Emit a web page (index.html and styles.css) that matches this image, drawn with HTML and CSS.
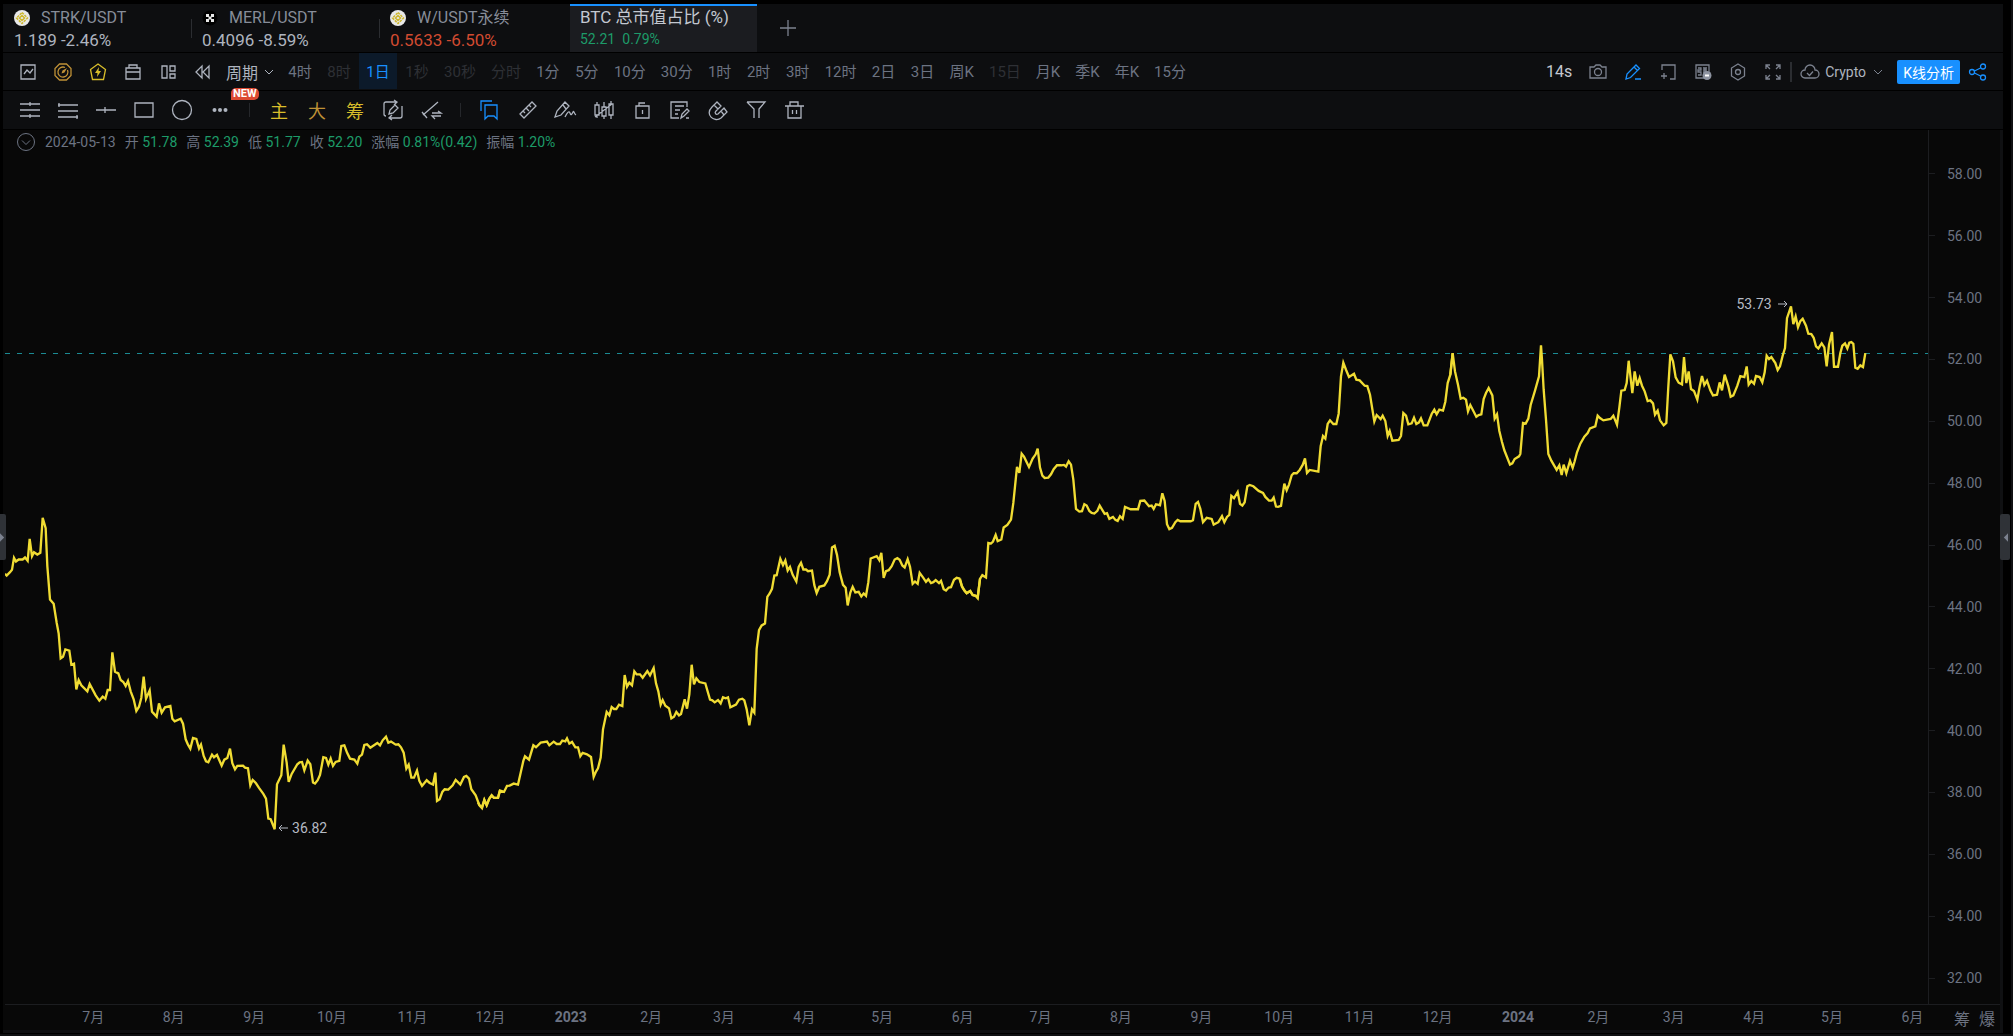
FILE: index.html
```html
<!DOCTYPE html>
<html lang="zh-CN">
<head>
<meta charset="utf-8">
<title>BTC 总市值占比 (%)</title>
<link rel="stylesheet" href="styles.css">
</head>
<body>
<div class="app">
  <nav class="tabs" aria-label="行情标签">
    <a class="tab" href="#strk">
      <span class="tab-name"><svg class="coin" viewBox="0 0 16 16"><circle cx="8" cy="8" r="8" fill="#e8e8e8"/><path d="M8 2.500 13.500 8 8 13.500 2.500 8z" fill="none" stroke="#cdb62c" stroke-width="1.500" stroke-dasharray="2.500 1"/><path d="M8 5.500 10.500 8 8 10.500 5.500 8z" fill="none" stroke="#cdb62c" stroke-width="1.500"/></svg>STRK/USDT</span>
      <span class="tab-price">1.189 -2.46%</span>
    </a>
    <a class="tab" href="#merl">
      <span class="tab-name"><svg class="coin" viewBox="0 0 16 16"><circle cx="8" cy="8" r="7.500" fill="#000"/><path d="M4 4h3v2.500h2V4h3v3H9.500v2H12v3H9V9.500H7V12H4V9h2.500V7H4z" fill="#e8e8e8"/></svg>MERL/USDT</span>
      <span class="tab-price">0.4096 -8.59%</span>
    </a>
    <a class="tab" href="#w">
      <span class="tab-name"><svg class="coin" viewBox="0 0 16 16"><circle cx="8" cy="8" r="8" fill="#e8e8e8"/><path d="M8 2.500 13.500 8 8 13.500 2.500 8z" fill="none" stroke="#cdb62c" stroke-width="1.500" stroke-dasharray="2.500 1"/><path d="M8 5.500 10.500 8 8 10.500 5.500 8z" fill="none" stroke="#cdb62c" stroke-width="1.500"/></svg>W/USDT永续</span>
      <span class="tab-price down">0.5633 -6.50%</span>
    </a>
    <a class="tab tab-active" href="#btc" aria-current="page">
      <span class="tab-title">BTC 总市值占比 (%)</span>
      <span class="tab-ratio">52.21&ensp;0.79%</span>
    </a>
    <button class="tab-add" aria-label="新增标签"><svg class="icon" viewBox="0 0 20 20"><path d="M10 2v16M2 10h16"/></svg></button>
  </nav>

  <div class="bar bar-period">
    <button class="tool" aria-label="图表"><svg class="icon" viewBox="0 0 20 20"><path d="M3 3h14v14H3zM6 12l3-4 3 3 3-4"/></svg></button>
    <button class="tool bronze" aria-label="指针"><svg class="icon" viewBox="0 0 20 20"><path d="M6.500 2h7L18 6.500v7L13.500 18h-7L2 13.500v-7z"/><path d="M12 5.500a5 5 0 1 0 2.500 2.500"/><path d="M8.500 11.500l1-3L14 6l-2.500 4.500z" fill="currentColor" stroke="none"/></svg></button>
    <button class="tool yellow" aria-label="闪电"><svg class="icon" viewBox="0 0 20 20"><path d="M10 2l7.500 5.500-2 10h-11l-2-10z"/><path d="M11 5l-4 6h2.500L9 15l4-6h-2.500z" fill="currentColor" stroke="none"/></svg></button>
    <button class="tool" aria-label="工具箱"><svg class="icon" viewBox="0 0 20 20"><path d="M3 6h14v11H3zM6 6V3h8v3M3 10h14"/></svg></button>
    <button class="tool" aria-label="布局"><svg class="icon" viewBox="0 0 20 20"><path d="M4 4h5v12H4zM12 4h5v5h-5zM12 12h5v4h-5z"/></svg></button>
    <button class="tool" aria-label="回放"><svg class="icon" viewBox="0 0 20 20"><path d="M9 4v12l-6-6zM16 4v12l-6-6z"/></svg></button>
    <button class="period-menu">周期<svg class="chev" viewBox="0 0 10 6"><path d="M1 1l4 4 4-4"/></svg><span class="badge">NEW</span></button>
    <div class="periods">
      <button class="period">4时</button><button class="period dim">8时</button><button class="period on">1日</button><button class="period dim">1秒</button><button class="period dim">30秒</button><button class="period dim">分时</button><button class="period">1分</button><button class="period">5分</button><button class="period">10分</button><button class="period">30分</button><button class="period">1时</button><button class="period">2时</button><button class="period">3时</button><button class="period">12时</button><button class="period">2日</button><button class="period">3日</button><button class="period">周K</button><button class="period dim">15日</button><button class="period">月K</button><button class="period">季K</button><button class="period">年K</button><button class="period">15分</button>
    </div>
    <div class="actions">
      <span class="timer">14s</span>
      <button class="tool muted" aria-label="截图"><svg class="icon" viewBox="0 0 20 20"><path d="M2 5h4l2-2h4l2 2h4v11H2z"/><circle cx="10" cy="10" r="3.500"/></svg></button>
      <button class="tool blue" aria-label="画线"><svg class="icon" viewBox="0 0 20 20"><path d="M3 17l1-5 9-9 3.500 3.500-9 9zM11 5l3.500 3.500M12 17h6"/></svg></button>
      <button class="tool muted" aria-label="新增窗口"><svg class="icon" viewBox="0 0 20 20"><path d="M4 8V3h13v14h-5M3 14h6M6 11v6"/></svg></button>
      <button class="tool muted" aria-label="弹幕"><svg class="icon" viewBox="0 0 20 20"><path d="M3 3h13v13H3zM5 6h3v2H5v2h3v3H5M10 6h4M10 8h4M10 10h4M12 6v7"/><circle cx="14" cy="13.500" r="4.500" fill="#8d93a0" stroke="none"/><path d="M12 13.500h4" stroke="#fff" stroke-width="2"/></svg></button>
      <button class="tool muted" aria-label="设置"><svg class="icon" viewBox="0 0 20 20"><path d="M10 2l6.500 4v8L10 18l-6.500-4V6z"/><circle cx="10" cy="10" r="2.500"/></svg></button>
      <button class="tool muted" aria-label="全屏"><svg class="icon" viewBox="0 0 20 20"><path d="M3 7V3h4M3 3l4 4M13 3h4v4M17 3l-4 4M3 13v4h4M3 17l4-4M17 13v4h-4M17 17l-4-4"/></svg></button>
      <label class="layout-pick">
        <svg class="icon cloud" viewBox="0 0 20 20"><path d="M5 16a4 4 0 0 1 0-8 5 5 0 0 1 10 0 4 4 0 0 1 0 8zM7 11l2.500 2.500L13 9.500"/></svg>
        <select aria-label="布局方案"><option>Crypto</option></select>
        <svg class="chev" viewBox="0 0 10 6"><path d="M1 1l4 4 4-4"/></svg>
      </label>
      <button class="analyse">K线分析</button>
      <button class="tool blue" aria-label="分享"><svg class="icon" viewBox="0 0 20 20"><circle cx="4" cy="10" r="2.500"/><circle cx="15" cy="4.500" r="2.500"/><circle cx="15" cy="15.500" r="2.500"/><path d="M6.500 9l6-3M6.500 11l6 3"/></svg></button>
    </div>
  </div>

  <div class="bar bar-draw">
    <button class="pen" aria-label="通道线"><svg class="icon" viewBox="0 0 20 20"><path d="M0 4h20M0 10h20M0 16h20M10 2v4M10 14v4"/></svg></button>
    <button class="pen" aria-label="平行线"><svg class="icon" viewBox="0 0 20 20"><path d="M0 5h20M0 11h20M0 17h20M1 3v4M19 15v4"/></svg></button>
    <button class="pen" aria-label="水平线"><svg class="icon" viewBox="0 0 20 20"><path d="M0 10h20M9 7v6"/></svg></button>
    <button class="pen" aria-label="矩形"><svg class="icon" viewBox="0 0 20 20"><path d="M1 3h18v14H1z"/></svg></button>
    <button class="pen" aria-label="圆形"><svg class="icon" viewBox="0 0 20 20"><circle cx="10" cy="10" r="9.500"/></svg></button>
    <button class="pen" aria-label="更多"><svg class="icon" viewBox="0 0 20 20"><g fill="currentColor" stroke="none"><circle cx="4.500" cy="10" r="2"/><circle cx="10" cy="10" r="2"/><circle cx="15.500" cy="10" r="2"/></g></svg></button>
    <span class="split"></span>
    <button class="pen glyph yellow">主</button>
    <button class="pen glyph bronze">大</button>
    <button class="pen glyph yellow">筹</button>
    <button class="pen" aria-label="切换画线"><svg class="icon" viewBox="0 0 20 20"><path d="M13 2H3q-2 0-2 2v10q0 2 2 2M11 0l3 2-3 3M7 18h10q2 0 2-2V6M9 15l-3 3 3 2M6 14l1-4 5-5 3 3-5 5z"/></svg></button>
    <button class="pen" aria-label="线段切换"><svg class="icon" viewBox="0 0 20 20"><path d="M2 15L17 2M1 12l5 6M11 13h9l-3-2M20 16h-9l3 3"/></svg></button>
    <span class="split"></span>
    <button class="pen blue" aria-label="书签"><svg class="icon" viewBox="0 0 20 20"><path d="M1 11V1h11M5 5h12v14l-3-3h-6l-3 3z"/></svg></button>
    <button class="pen" aria-label="尺子"><svg class="icon" viewBox="0 0 20 20"><path d="M2 14L14 2l4 4L6 18zM5 11l2 2M8 8l3 3M11 5l2 2"/></svg></button>
    <button class="pen" aria-label="画笔"><svg class="icon" viewBox="0 0 20 20"><path d="M-1 17l2-6 8-9 4 4-8 9zM7 5l3 4M9 17c2-4 4-7 5-4s2 1 3-1 1 2 3 3"/></svg></button>
    <button class="pen" aria-label="K线"><svg class="icon" viewBox="0 0 20 20"><path d="M1 5h4v10H1zM3 2v3M3 15v3M8 7h4v9H8zM10 2v5M10 16v3M15 4h4v11h-4zM17 1v3M17 15v4M1 17L18 4"/></svg></button>
    <button class="pen" aria-label="锁定"><svg class="icon" viewBox="0 0 20 20"><path d="M4 6h13v12H4zM7 6V3h6M10.500 10v4"/></svg></button>
    <button class="pen" aria-label="笔记"><svg class="icon" viewBox="0 0 20 20"><path d="M17 7V2H1v16h8M5 6h9M5 10h5M5 14h3M11 18l1-4 5-5 2 2-5 5zM16 18h3"/></svg></button>
    <button class="pen" aria-label="磁吸"><svg class="icon" viewBox="0 0 20 20"><path d="M9 2L4 7c-8 8 3 16 9 11l6-6-3-4-6 6c-2 1-4-1-2-3l5-5zM6 5l4 4M13 11l3 4"/></svg></button>
    <button class="pen" aria-label="筛选"><svg class="icon" viewBox="0 0 20 20"><path d="M1 2h18l-6 7v9M1 2l7 7v9"/></svg></button>
    <button class="pen" aria-label="删除"><svg class="icon" viewBox="0 0 20 20"><path d="M1 6h19M4 6v12h13V6M6 6V2h8v4M8.500 10v4M12.500 10v4"/></svg></button>
  </div>

  <main class="board">
    <section class="plot">
      <svg class="series" viewBox="15 390 5769 2625" preserveAspectRatio="none" role="img" aria-label="BTC 总市值占比走势">
        <path class="last" d="M15 1060H5784"/>
        <g transform="translate(0 1440)"><polyline points="15,283 20,288 30,278 36,271 42,235 48,246 56,240 68,240 75,234 83,244 89,178 96,230 102,218 112,225 121,220 128,115 137,146 142,260 150,360 161,373 170,430 176,462 182,537 189,532 196,510 208,514 214,556 222,553 229,630 236,602 244,618 262,636 269,614 287,648 298,664 308,652 316,658 323,632 330,632 337,519 345,577 355,582 362,602 370,608 377,620 384,605 392,636 401,660 409,695 417,682 424,655 431,592 438,658 449,633 456,697 470,712 477,672 485,700 495,684 511,680 517,718 524,726 542,718 549,733 557,780 564,796 571,808 579,776 589,779 597,808 603,796 611,830 618,846 625,849 636,826 642,834 651,827 665,859 673,841 682,836 690,808 697,852 705,870 712,860 729,859 735,865 744,867 751,918 758,902 768,912 777,926 790,944 798,958 805,1018 812,1020 824,1050 831,915 844,888 851,796 860,850 866,908 875,884 892,855 899,849 906,848 913,873 923,844 931,855 939,910 945,913 953,903 960,887 970,834 978,836 985,856 992,838 999,860 1007,848 1018,845 1024,800 1033,798 1041,820 1050,838 1063,841 1072,853 1078,832 1086,826 1093,797 1101,795 1111,805 1132,791 1140,798 1148,783 1158,772 1165,790 1173,787 1187,796 1195,795 1203,804 1211,820 1219,868 1226,856 1234,895 1242,895 1251,874 1258,905 1266,920 1280,903 1289,911 1299,916 1306,880 1311,965 1319,960 1327,938 1334,930 1345,931 1358,918 1367,902 1381,916 1392,893 1399,890 1407,898 1414,930 1427,948 1438,978 1446,987 1453,962 1460,978 1467,960 1475,948 1482,956 1494,956 1500,932"/></g>
        <g transform="translate(1440 1560)"><polyline points="-6,850 0,860 6,864 13,842 20,858 28,838 35,829 42,836 54,836 60,814 72,818 81,800 89,799 101,793 114,796 121,765 130,725 135,711 147,721 160,678 168,684 182,670 201,667 208,678 221,667 230,674 240,674 247,664 256,666 261,657 268,673 276,668 286,684 294,684 301,711 308,701 321,705 333,713 341,773 348,757 354,747 362,715 369,630 380,578 388,588 395,563 402,569 409,569 417,556 427,560 434,467 441,502 448,490 456,498 463,456 470,465 480,465 488,475 502,455 510,468 521,446 528,492 535,516 542,556 548,542 556,559 567,567 574,597 582,592 589,578 597,588 603,584 614,540 621,568 628,525 635,436 642,495 649,477 658,488 676,492 690,541 697,543 704,549 714,542 722,552 729,534 737,537 744,534 751,564 768,556 777,541 787,538 793,543 800,570 808,618 816,570 823,580 830,388 837,332 845,318 855,312 862,232 869,222 876,208 883,168 890,167 901,118 909,137 916,123 923,153 930,142 938,166 949,186 956,142 963,130 970,150 978,150 984,155 996,153 1003,197 1010,221 1018,202 1033,198 1041,185 1049,166 1056,84 1064,79 1071,106 1079,158 1089,196 1097,205 1103,258 1111,219 1118,202 1126,219 1136,217 1144,231 1151,222 1158,229 1165,188 1172,117 1190,110 1198,122 1204,100 1211,175 1218,155 1226,152 1235,140 1244,120 1252,116 1259,121 1267,138 1274,144 1283,119 1290,142 1298,193 1305,186 1313,193 1319,160 1330,175 1338,187 1345,179 1353,191 1360,188 1367,182 1377,191 1383,184 1391,209 1398,213 1406,204 1413,203 1422,181 1430,175 1438,177 1445,198 1454,214 1460,221 1470,215 1479,227 1487,229 1493,236 1500,178"/></g>
        <g transform="translate(2880 960)"><polyline points="0,778 6,802 12,812 20,821 31,814 37,826 47,829 53,834 60,778 67,767 78,774 85,670 93,672 99,666 107,646 113,665 124,660 131,624 142,616 153,600 160,550 171,442 178,460 185,402 192,411 207,442 218,417 227,404 233,387 240,444 247,468 254,475 265,474 273,464 281,449 291,437 304,437 312,436 318,441 326,425 333,435 340,480 348,568 358,576 366,575 373,554 380,558 388,574 395,580 403,582 412,574 419,558 434,583 441,581 448,598 459,592 466,601 473,604 480,590 488,598 495,562 512,569 534,569 541,544 553,543 567,560 575,558 581,568 588,554 600,557 607,521 614,544 621,614 628,629 636,625 646,608 653,601 661,605 692,605 699,602 707,553 714,547 721,568 729,608 740,595 755,598 761,615 775,608 786,590 793,608 801,592 808,586 814,529 822,536 833,517 840,553 847,558 854,548 862,500 869,496 880,500 896,514 909,520 916,532 927,543 935,543 941,534 948,561 954,562 963,559 973,492 980,512 987,495 995,467 1001,461 1010,461 1019,451 1028,436 1035,416 1041,460 1049,451 1075,456 1082,380 1089,349 1096,357 1103,313 1110,302 1120,313 1129,313 1136,282 1143,170 1150,129 1158,150 1167,172 1182,162 1189,180 1199,182 1214,198 1222,199 1230,225 1243,305 1250,286 1262,298 1268,288 1276,304 1283,349 1289,334 1297,363 1316,361 1323,349 1330,280 1338,288 1345,314 1355,311 1362,294 1369,313 1377,308 1383,296 1391,317 1402,317 1415,283 1423,270 1430,284 1438,270 1449,273 1456,246 1463,190 1471,165 1478,100"/></g>
        <g transform="translate(4200 840)"><polyline points="151,285 158,220 165,275 174,315 182,357 190,354 198,360 204,395 211,376 229,411 236,406 244,404 251,358 258,340 266,325 277,347 284,417 291,404 298,454 306,487 313,512 330,555 337,551 344,538 357,530 361,523 369,430 377,432 385,417 392,376 405,333 417,290 423,197 426,240 431,330 438,420 445,523 454,543 470,571 478,557 485,586 491,555 499,581 510,544 518,565 524,545 531,518 541,492 553,471 563,460 570,446 586,440 593,408 600,415 610,422 632,418 640,408 651,435 658,384 664,333 674,331 680,310 686,243 697,340 704,275 712,318 719,295 726,318 734,335 743,364 751,362 759,371 765,405 773,393 780,422 791,437 799,430 805,320 811,224 819,245 827,293 836,309 846,314 852,232 859,310 866,275 873,328 882,334 892,360 899,320 906,289 913,316 921,303 931,332 939,347 951,345 959,308 966,332 974,285 985,320 992,351 1000,347 1012,318 1021,289 1033,292 1040,260 1046,315 1054,304 1062,312 1068,289 1079,292 1087,308 1094,278 1100,228 1107,238 1114,232 1126,250 1133,271 1140,260 1148,228 1155,205 1161,115 1173,80 1180,133 1187,110 1194,142 1201,124 1208,117 1218,138 1225,162 1234,163 1241,174 1248,200 1255,206 1265,191 1273,203 1280,260 1287,195 1296,157 1302,261 1314,261 1321,220 1327,198 1335,191 1342,206 1348,189 1354,187 1360,192 1366,264 1373,267 1381,257 1389,262 1396,220"/></g>
      </svg>
      <p class="ohlc"><svg class="icon fold" viewBox="0 0 20 20"><circle cx="10" cy="10" r="8.500"/><path d="M6 8.500l4 4 4-4"/></svg><span>2024-05-13</span><span>开 <b>51.78</b></span><span>高 <b>52.39</b></span><span>低 <b>51.77</b></span><span>收 <b>52.20</b></span><span>涨幅 <b>0.81%(0.42)</b></span><span>振幅 <b>1.20%</b></span></p>
      <span class="mark mark-low"><svg class="arrow" viewBox="0 0 10 8"><path d="M10 4H1M4 1L1 4l3 3"/></svg>36.82</span>
      <span class="mark mark-high">53.73<svg class="arrow" viewBox="0 0 10 8"><path d="M0 4h9M6 1l3 3-3 3"/></svg></span>
    </section>

    <div class="prices">
      <span class="gap"></span><span>58.00</span><span>56.00</span><span>54.00</span><span>52.00</span><span>50.00</span><span>48.00</span><span>46.00</span><span>44.00</span><span>42.00</span><span>40.00</span><span>38.00</span><span>36.00</span><span>34.00</span><span>32.00</span>
    </div>

    <div class="months">
      <span></span><span>7月</span><span>8月</span><span>9月</span><span>10月</span><span>11月</span><span>12月</span><span class="year">2023</span><span>2月</span><span>3月</span><span>4月</span><span>5月</span><span>6月</span><span>7月</span><span>8月</span><span>9月</span><span>10月</span><span>11月</span><span>12月</span><span class="year">2024</span><span>2月</span><span>3月</span><span>4月</span><span>5月</span><span>6月</span>
    </div>
    <div class="corner"><button>筹</button><button>爆</button></div>
  </main>

  <button class="handle handle-left" aria-label="展开左侧栏"><svg viewBox="0 0 6 10"><path d="M0 0l5 5-5 5z"/></svg></button>
  <button class="handle handle-right" aria-label="展开右侧栏"><svg viewBox="0 0 6 10"><path d="M6 0L1 5l5 5z"/></svg></button>
</div>
</body>
</html>
```
FILE: styles.css
```css
* { box-sizing: border-box; }

body {
  margin: 0;
  background: #000;
  color: #aeb4bf;
  font-family: Roboto, "Noto Sans CJK SC", sans-serif;
  font-size: 15px;
}

button, select {
  margin: 0;
  padding: 0;
  border: 0;
  background: none;
  color: inherit;
  font: inherit;
  cursor: pointer;
}

.app {
  position: relative;
  display: flex;
  flex-direction: column;
  min-height: 100vh;
  padding: 4px 8px 1px 3px;
  border-right: 2px solid #101113;
  border-bottom: 2px solid #101113;
}

.icon {
  width: 20px;
  height: 20px;
  fill: none;
  stroke: currentColor;
  stroke-width: 1.3;
  flex: none;
  overflow: visible;
}

.chev {
  width: 10px;
  height: 6px;
  fill: none;
  stroke: currentColor;
  flex: none;
}

.yellow { color: #d8bd2a; }
.bronze { color: #bf9136; }
.blue { color: #1890ff; }
.muted { color: #7c828f; }

/* symbol tabs */
.tabs {
  display: flex;
  height: 49px;
  background: #0d0e10;
  border-bottom: 1px solid #000;
}

.tab {
  position: relative;
  display: flex;
  flex-direction: column;
  width: 188px;
  padding: 2px 0 0 11px;
  color: #aeb4bf;
  font-size: 16px;
  line-height: 23px;
  text-decoration: none;
}

.tab + .tab:not(.tab-active)::before {
  content: "";
  position: absolute;
  left: 0;
  top: 15px;
  width: 1px;
  height: 19px;
  background: #2b2d31;
}

.tab-name {
  display: flex;
  align-items: center;
  gap: 11px;
  color: #878d99;
}

.coin { width: 16px; height: 16px; }
.tab-price { font-size: 17px; }
.tab-price.down { color: #d14b31; }

.tab-active {
  width: 187px;
  margin-left: 3px;
  padding: 0 0 0 10px;
  border-top: 2px solid #1890ff;
  background: #1b1c20;
}

.tab-title { color: #c3c8d1; font-size: 17px; }

.tab-ratio {
  color: #1d9b69;
  font-size: 14px;
  line-height: 20px;
}

.tab-add {
  width: 62px;
  color: #7c828f;
}

.tab-add .icon { vertical-align: middle; }

/* toolbars */
.bar {
  display: flex;
  align-items: center;
  height: 38px;
  padding-left: 7px;
  background: #0d0e10;
  border-bottom: 1px solid #000;
}

.tool, .pen {
  display: flex;
  align-items: center;
  justify-content: center;
  flex: none;
  height: 100%;
}

.tool { width: 35px; }

.period-menu {
  position: relative;
  display: flex;
  align-items: center;
  gap: 6px;
  height: 100%;
  padding: 0 7px 0 6px;
  font-size: 16px;
}

.badge {
  position: absolute;
  left: 11px;
  top: 35px;
  z-index: 1;
  padding: 0 2px;
  border-radius: 5px 5px 5px 0;
  background: #dc4a33;
  color: #fff;
  font-size: 11px;
  font-weight: 700;
  line-height: 12px;
}

.periods {
  display: flex;
  gap: 1px;
  height: 100%;
}

.period {
  min-width: 38px;
  height: 36px;
  padding: 0 7px 2px;
  color: #6c7382;
  white-space: nowrap;
}

.period.dim { color: #2e3035; }

.period.on {
  background: #0c1a2a;
  color: #1890ff;
}

.actions {
  display: flex;
  align-items: center;
  height: 100%;
  margin-left: auto;
  padding-right: 8px;
}

.timer { padding-right: 8px; color: #c3c8d1; font-size: 16px; }

.layout-pick {
  display: flex;
  align-items: center;
  gap: 5px;
  height: 20px;
  margin-right: 14px;
  padding-left: 8px;
  border-left: 2px solid #2b2d31;
  color: #7c828f;
}

.layout-pick select {
  width: 43px;
  appearance: none;
  color: #aeb4bf;
  font-size: 14px;
}

.analyse {
  height: 24px;
  padding: 0 6px;
  border-radius: 2px;
  background: #1890ff;
  color: #fff;
  font-size: 14px;
}

.bar-draw {
  height: 39px;
  padding-left: 8px;
}

.pen { width: 38px; }
.glyph { font-size: 18px; }

.split {
  width: 1px;
  height: 14px;
  margin: 0 10px;
  background: #25272b;
}

/* chart */
.board {
  flex: 1;
  display: grid;
  grid-template-columns: 1fr 72px;
  grid-template-rows: 1fr 26px;
  padding: 0 0 0 2px;
  border-right: 3px solid #0f1012;
  border-bottom: 3px solid #0f1012;
  background: #080808;
}

.plot {
  position: relative;
  padding: 2px 0 0 11px;
}

.series {
  position: absolute;
  inset: 0;
  width: 100%;
  height: 100%;
}

.series polyline {
  fill: none;
  stroke: #f0dc33;
  stroke-width: 7;
}

.series .last {
  fill: none;
  stroke: #1b8a93;
  stroke-width: 1px;
  stroke-dasharray: 5 7;
  vector-effect: non-scaling-stroke;
  shape-rendering: crispEdges;
}

.ohlc {
  position: relative;
  display: flex;
  align-items: center;
  gap: 9px;
  margin: 0;
  color: #6c7382;
  font-size: 14px;
  line-height: 20px;
}

.ohlc b { color: #1d9b69; font-weight: 400; }

.fold { stroke-width: 1; }

.mark {
  position: absolute;
  display: flex;
  align-items: center;
  gap: 4px;
  color: #b5bac4;
  font-size: 14px;
  line-height: 16px;
}

.mark-low { left: 14.2%; top: 79%; }
.mark-high { right: 7.3%; top: 19%; gap: 6px; }

.arrow {
  width: 10px;
  height: 8px;
  fill: none;
  stroke: currentColor;
}

.prices {
  display: grid;
  grid-template-rows: 44fr repeat(13, 62fr) 26fr;
  border-left: 1px solid #1c1d20;
  color: #6c7382;
  font-size: 14px;
}

.prices span {
  display: flex;
  align-items: center;
  gap: 12px;
  height: 0;
}

.prices span:not(.gap)::before {
  content: "";
  width: 6px;
  height: 1px;
  background: #1c1d20;
}

/* columns are the days from one label to the next */
.months {
  display: grid;
  grid-template-columns: 34fr 31fr 31fr 30fr 31fr 30fr 31fr 31fr 28fr 31fr 30fr 31fr 30fr 31fr 31fr 30fr 31fr 30fr 31fr 31fr 29fr 31fr 30fr 31fr 6fr;
  border-top: 1px solid #1c1d20;
  color: #6c7382;
  font-size: 14px;
  line-height: 25px;
}

.months span {
  display: flex;
  justify-content: center;
  width: 0;
  white-space: nowrap;
}

.months .year { font-weight: 700; }

.corner {
  display: flex;
  gap: 9px;
  padding-left: 26px;
  border-top: 1px solid #1c1d20;
  color: #6c7382;
  font-size: 16px;
}

/* side panel handles */
.handle {
  position: absolute;
  top: 514px;
  display: flex;
  align-items: center;
  height: 46px;
  background: #2f3237;
}

.handle svg { width: 5px; height: 9px; fill: #7c828f; }
.handle-left { left: 0; width: 6px; border-radius: 0 2px 2px 0; }
.handle-right { right: 1px; width: 10px; justify-content: center; border-radius: 2px; }
```
